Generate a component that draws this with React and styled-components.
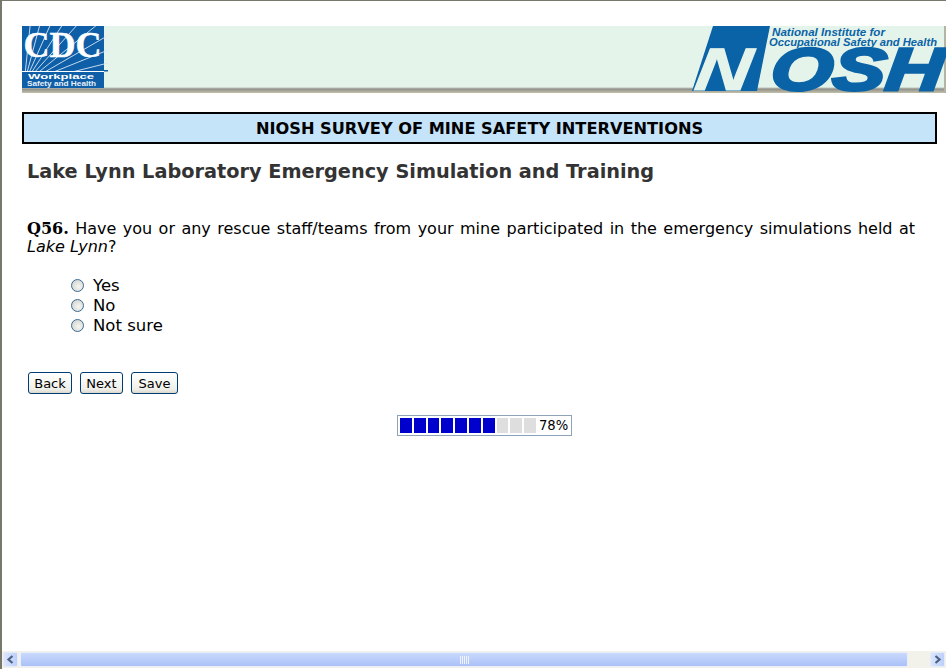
import React from "react";
import styled, { createGlobalStyle } from "styled-components";

const GlobalStyle = createGlobalStyle`
  html, body {
    margin: 0;
    padding: 0;
    height: 100%;
    background: #fff;
    overflow: hidden;
  }
`;

const Frame = styled.div`
  width: 946px;
  height: 669px;
  box-sizing: border-box;
  border-top: 1px solid #77776c;
  border-left: 2px solid #77776c;
  display: flex;
  flex-direction: column;
  font-family: "DejaVu Sans", Verdana, sans-serif;
  color: #000;
  overflow: hidden;
`;

const Page = styled.main`
  flex: 1;
  min-height: 0;
  padding: 25px 0 0 20px;
`;

const Banner = styled.header`
  width: 924px;
  height: 67px;
  box-sizing: border-box;
  display: flex;
  justify-content: space-between;
  background: linear-gradient(to bottom, #e5f4eb 0, #e5f4eb 61px, #8f8f88 63px, #a8a89c 65px, #c4c0a8 67px);
  box-shadow: inset -2px 0 0 #b4b4a4;
`;

const SurveyTitle = styled.h1`
  width: 915px;
  height: 32px;
  margin: 19px 0 0;
  box-sizing: border-box;
  border: 2px solid #000;
  background: #c5e3f9;
  font-size: 16.2px;
  font-weight: bold;
  line-height: 29px;
  text-align: center;
`;

const SectionTitle = styled.h2`
  margin: 16px 0 0 5px;
  color: #333;
  font-size: 19.3px;
  line-height: 24px;
  font-weight: bold;
`;

const Question = styled.p`
  width: 888px;
  margin: 36px 0 0 5px;
  font-size: 16px;
  line-height: 18px;
  text-align: justify;
`;

const QuestionNumber = styled.strong`
  font-family: "DejaVu Serif", Georgia, serif;
`;

const Options = styled.div`
  margin: 19px 0 0 49px;
  display: flex;
  flex-direction: column;
`;

const Option = styled.label`
  height: 20px;
  display: flex;
  align-items: center;
  gap: 9px;
  font-size: 16.5px;
`;

const Radio = styled.span`
  width: 13px;
  height: 13px;
  box-sizing: border-box;
  border: 1px solid #3a6a92;
  border-radius: 50%;
  background: radial-gradient(circle at 60% 60%, #f6f6f2 0, #dfe0dc 55%, #c2c4c4 100%);
`;

const Buttons = styled.div`
  margin: 37px 0 0 6px;
  display: flex;
  gap: 8px;
`;

const Button = styled.button`
  height: 22px;
  width: ${(props) => props.$width}px;
  padding: 0;
  box-sizing: border-box;
  border: 1px solid #003c74;
  border-radius: 3px;
  background: linear-gradient(to bottom, #fff, #f0f0ea 80%, #dcd8ce);
  font-family: "DejaVu Sans", Verdana, sans-serif;
  font-size: 13px;
  color: #000;
`;

const ProgressRow = styled.div`
  margin: 21px 0 0 375px;
  width: 175px;
  height: 21px;
  box-sizing: border-box;
  border: 1px solid #8ea2b8;
  padding: 2px;
  display: flex;
  align-items: stretch;
  gap: 2px;
`;

const ProgressCell = styled.span`
  width: 11.8px;
  background: ${(props) => (props.$on ? "#0000cc" : "#dedede")};
`;

const ProgressLabel = styled.span`
  margin-left: 1px;
  font-size: 13.2px;
  line-height: 15px;
`;

const ScrollBar = styled.div`
  height: 17px;
  margin-bottom: 1px;
  display: flex;
  align-items: center;
  padding: 0 1px 0 1px;
  background: #f3f2ea;
  flex-shrink: 0;
`;

const ScrollButton = styled.div`
  width: 15px;
  height: 15px;
  box-sizing: border-box;
  border: 1px solid #e4ebfb;
  border-radius: 2px;
  background: linear-gradient(to right, #dbe6fd, #bccffa);
  display: flex;
  align-items: center;
  justify-content: center;
  margin-left: ${(props) => (props.$end ? "auto" : "0")};
`;

const ScrollThumb = styled.div`
  width: 888px;
  height: 15px;
  margin-left: 2px;
  box-sizing: border-box;
  border: 1px solid #e8eefc;
  border-radius: 2px;
  background: linear-gradient(to bottom, #c9d8fc, #b7cbfa 60%, #abc1f6);
  display: flex;
  align-items: center;
  justify-content: center;
`;

const rayAngles = [84, 75, 66, 57, 48, 39, 30, 22, 14];

const CdcLogo = () => (
  <svg width="86" height="63" viewBox="0 0 86 63" style={{ display: "block" }}>
    <rect width="82" height="62" fill="#0f5fa8" />
    <g stroke="#d6e6f4" strokeWidth="0.9">
      {rayAngles.map((angle) => {
        const r = (angle * Math.PI) / 180;
        return (
          <line
            key={angle}
            x1={2 + 12 * Math.cos(r)}
            y1={58 - 12 * Math.sin(r)}
            x2={2 + 110 * Math.cos(r)}
            y2={58 - 110 * Math.sin(r)}
          />
        );
      })}
    </g>
    <rect y="45" width="82" height="17" fill="#0f5fa8" />
    <text x="1.5" y="31" fontFamily="Liberation Serif, serif" fontWeight="bold" fontSize="36" textLength="78" lengthAdjust="spacingAndGlyphs" fill="#fff" stroke="#fff" strokeWidth="0.5">CDC</text>
    <rect y="45" width="82" height="1" fill="#fff" />
    <rect x="82" y="44" width="4" height="1.5" fill="#0f5fa8" />
    <text x="6" y="53" fontFamily="Liberation Sans, sans-serif" fontSize="8" fontWeight="bold" textLength="66" lengthAdjust="spacingAndGlyphs" fill="#fff">Workplace</text>
    <text x="5" y="60" fontFamily="Liberation Sans, sans-serif" fontSize="7.5" fontWeight="bold" textLength="69" lengthAdjust="spacingAndGlyphs" fill="#e8f0f8">Safety and Health</text>
  </svg>
);

const NioshLogo = () => (
  <svg width="256" height="67" viewBox="0 0 256 67" style={{ display: "block" }}>
    <path d="M23 0 H80 L67 65 H2 Z" fill="#0a63a6" />
    <text x="0" y="64" transform="translate(12 0) skewX(-8)" fontFamily="Liberation Sans, sans-serif" fontWeight="bold" fontStyle="italic" fontSize="60" textLength="56" lengthAdjust="spacingAndGlyphs" fill="#e5f4eb" stroke="#e5f4eb" strokeWidth="1">N</text>
    <text x="82" y="10" fontFamily="Liberation Sans, sans-serif" fontWeight="bold" fontStyle="italic" fontSize="10.5" textLength="113" lengthAdjust="spacingAndGlyphs" fill="#0a63a6">National Institute for</text>
    <text x="79" y="20" fontFamily="Liberation Sans, sans-serif" fontWeight="bold" fontStyle="italic" fontSize="10.5" textLength="168" lengthAdjust="spacingAndGlyphs" fill="#0a63a6">Occupational Safety and Health</text>
    <text x="78" y="64" transform="translate(8 0) skewX(-6)" fontFamily="Liberation Sans, sans-serif" fontWeight="bold" fontStyle="italic" fontSize="60" textLength="172" lengthAdjust="spacingAndGlyphs" fill="#0a63a6" stroke="#0a63a6" strokeWidth="3">OSH</text>
  </svg>
);

const Arrow = ({ points }) => (
  <svg width="9" height="9" viewBox="0 0 9 9">
    <path d={points} fill="none" stroke="#4d6185" strokeWidth="2.2" />
  </svg>
);

const Grip = () => (
  <svg width="9" height="8" viewBox="0 0 9 8">
    <path d="M0.5 0V8M2.5 0V8M4.5 0V8M6.5 0V8M8.5 0V8" stroke="#eef3ff" strokeWidth="1" />
  </svg>
);

const options = ["Yes", "No", "Not sure"];
const cells = [1, 1, 1, 1, 1, 1, 1, 0, 0, 0];

export default function App() {
  return (
    <Frame>
      <GlobalStyle />
      <Page>
        <Banner>
          <CdcLogo />
          <NioshLogo />
        </Banner>
        <SurveyTitle>NIOSH SURVEY OF MINE SAFETY INTERVENTIONS</SurveyTitle>
        <SectionTitle>Lake Lynn Laboratory Emergency Simulation and Training</SectionTitle>
        <Question>
          <QuestionNumber>Q56.</QuestionNumber> Have you or any rescue staff/teams from your mine participated in the emergency simulations held at <em>Lake Lynn</em>?
        </Question>
        <Options>
          {options.map((option) => (
            <Option key={option}>
              <Radio />
              {option}
            </Option>
          ))}
        </Options>
        <Buttons>
          <Button $width={44}>Back</Button>
          <Button $width={43}>Next</Button>
          <Button $width={47}>Save</Button>
        </Buttons>
        <ProgressRow>
          {cells.map((on, key) => (
            <ProgressCell key={key} $on={on} />
          ))}
          <ProgressLabel>78%</ProgressLabel>
        </ProgressRow>
      </Page>
      <ScrollBar>
        <ScrollButton>
          <Arrow points="M6.5 1 L2.5 4.5 L6.5 8" />
        </ScrollButton>
        <ScrollThumb>
          <Grip />
        </ScrollThumb>
        <ScrollButton $end>
          <Arrow points="M2.5 1 L6.5 4.5 L2.5 8" />
        </ScrollButton>
      </ScrollBar>
    </Frame>
  );
}
